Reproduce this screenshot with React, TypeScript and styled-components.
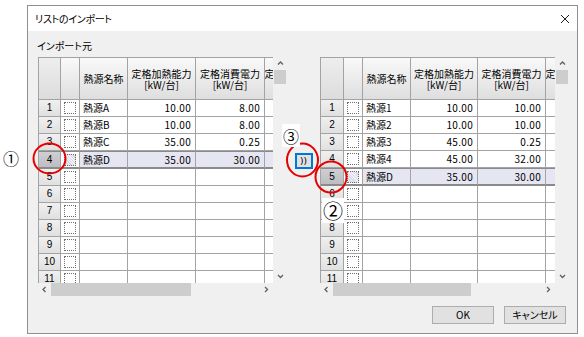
import React from "react";
import styled, { createGlobalStyle, css } from "styled-components";

const GlobalStyle = createGlobalStyle`
  html, body { margin: 0; padding: 0; background: #ffffff; }
  body { font-family: "Noto Sans CJK JP", "Noto Sans", sans-serif; color: #000; }
  *, *::before, *::after { box-sizing: border-box; }
`;

type RowData = { no: number; name?: string; heat?: string; power?: string; selected?: boolean };

const leftRows: RowData[] = [
  { no: 1, name: "熱源A", heat: "10.00", power: "8.00" },
  { no: 2, name: "熱源B", heat: "10.00", power: "8.00" },
  { no: 3, name: "熱源C", heat: "35.00", power: "0.25" },
  { no: 4, name: "熱源D", heat: "35.00", power: "30.00", selected: true },
  { no: 5 }, { no: 6 }, { no: 7 }, { no: 8 }, { no: 9 }, { no: 10 }, { no: 11 },
];

const rightRows: RowData[] = [
  { no: 1, name: "熱源1", heat: "10.00", power: "10.00" },
  { no: 2, name: "熱源2", heat: "10.00", power: "10.00" },
  { no: 3, name: "熱源3", heat: "45.00", power: "0.25" },
  { no: 4, name: "熱源4", heat: "45.00", power: "32.00" },
  { no: 5, name: "熱源D", heat: "35.00", power: "30.00", selected: true },
  { no: 6 }, { no: 7 }, { no: 8 }, { no: 9 }, { no: 10 }, { no: 11 },
];

const LINE = "#a3a3a3";
const SEL_LINE = "#8a8a8a";

const Page = styled.div`
  position: relative;
  width: 584px;
  height: 337px;
  padding: 5px 0 0 27px;
  overflow: hidden;
`;

const Dialog = styled.div`
  width: 551px;
  height: 329px;
  border: 1px solid #8f8f8f;
  background: #f0f0f0;
  display: flex;
  flex-direction: column;
`;

const TitleBar = styled.div`
  height: 25px;
  flex: none;
  background: #ffffff;
  display: flex;
  align-items: center;
  justify-content: space-between;
  padding: 0 7px;
`;

const Title = styled.span`
  font-size: 10px;
  font-feature-settings: "palt";
  letter-spacing: -0.3px;
`;

const Body = styled.div`
  flex: 1;
  display: flex;
  flex-direction: column;
  padding: 8px 8px 9px 10px;
`;

const SectionLabel = styled.div`
  font-size: 10px;
  line-height: 14px;
  height: 14px;
  margin: 0 0 4px -1px;
  font-feature-settings: "palt";
`;

const GridsRow = styled.div`
  display: flex;
  height: 239px;
`;

const Middle = styled.div`
  width: 33px;
  display: flex;
  flex-direction: column;
  align-items: center;
  padding-top: 96px;
`;

const MoveButton = styled.button`
  width: 18px;
  height: 16px;
  padding: 0;
  border: 2px solid #0078d7;
  background: #e1e1e1;
  font-family: "DejaVu Sans", sans-serif;
  font-size: 9px;
  line-height: 10px;
  color: #000;
  letter-spacing: 0px;
`;

const GridFrame = styled.div`
  width: 249px;
  height: 239px;
  display: grid;
  grid-template-columns: 235px 14px;
  grid-template-rows: 226px 13px;
`;

const Viewport = styled.div`
  overflow: hidden;
  background: #ffffff;
  border-top: 1px solid ${LINE};
  border-left: 1px solid ${LINE};
`;

const GridLine = styled.div<{ $cols: string }>`
  display: grid;
  grid-template-columns: ${(p) => p.$cols};
  width: max-content;
`;

const cellBase = css<{ $selected?: boolean }>`
  border-right: 1px solid ${LINE};
  border-bottom: 1px solid ${LINE};
  height: 17px;
  font-size: 10px;
  line-height: 16px;
  white-space: nowrap;
  overflow: hidden;
  ${(p) =>
    p.$selected &&
    css`
      border-top: 1px solid ${SEL_LINE};
      border-bottom: 2px solid ${SEL_LINE};
      height: 18px;
      line-height: 15px;
    `}
`;

const HeaderCell = styled.div`
  height: 42px;
  border-right: 1px solid ${LINE};
  border-bottom: 1px solid ${LINE};
  background: linear-gradient(#f9f9f9, #e9e9e9 60%, #dedede);
  display: flex;
  flex-direction: column;
  align-items: center;
  justify-content: center;
  font-size: 10px;
  line-height: 11px;
  white-space: nowrap;
  overflow: hidden;
`;

const CornerHeader = styled(HeaderCell)`
  background: linear-gradient(#eeeeee, #dcdcdc);
`;

const RowHead = styled.div<{ $selected?: boolean }>`
  ${cellBase}
  text-align: center;
  background: ${(p) =>
    p.$selected ? "linear-gradient(#cfcfd3, #bdbdc2)" : "linear-gradient(#f0f0f0, #e0e0e0)"};
  font-family: "Liberation Sans Narrow", "Liberation Sans", sans-serif;
`;

const CheckCell = styled.div<{ $selected?: boolean }>`
  ${cellBase}
  display: flex;
  align-items: center;
  padding-left: 3px;
  background: #ffffff;
`;

const CheckBox = styled.span<{ $selected?: boolean }>`
  display: block;
  width: 12px;
  height: 12px;
  border: 1px dotted #6e6e6e;
  background: ${(p) =>
    p.$selected
      ? "repeating-linear-gradient(45deg, #d6d8e6 0 1px, #f2f2f8 1px 2px)"
      : "#ffffff"};
`;

const TextCell = styled.div<{ $selected?: boolean }>`
  ${cellBase}
  padding-left: 3px;
  background: ${(p) => (p.$selected ? "#e6e6f2" : "#ffffff")};
`;

const NumCell = styled.div<{ $selected?: boolean }>`
  ${cellBase}
  text-align: right;
  padding-right: 4px;
  letter-spacing: 0.3px;
  background: ${(p) => (p.$selected ? "#e6e6f2" : "#ffffff")};
`;

const VScroll = styled.div`
  background: #f0f0f0;
  display: flex;
  flex-direction: column;
  align-items: center;
`;

const HScroll = styled.div`
  background: #f0f0f0;
  display: flex;
  align-items: center;
`;

const ArrowBox = styled.div<{ $w: number; $h: number }>`
  width: ${(p) => p.$w}px;
  height: ${(p) => p.$h}px;
  flex: none;
  display: flex;
  align-items: center;
  justify-content: center;
`;

const Thumb = styled.div<{ $w: number; $h: number }>`
  width: ${(p) => p.$w}px;
  height: ${(p) => p.$h}px;
  flex: none;
  background: #cdcdcd;
`;

const Spacer = styled.div`
  flex: 1;
`;

const Corner = styled.div`
  background: #f0f0f0;
`;

const Footer = styled.div`
  margin-top: auto;
  display: flex;
  justify-content: flex-end;
  gap: 10px;
  padding-right: 3px;
`;

const DialogButton = styled.button`
  width: 62px;
  height: 18px;
  padding: 0;
  border: 1px solid #adadad;
  background: #e1e1e1;
  font-family: "Noto Sans CJK JP", sans-serif;
  font-size: 10px;
  line-height: 14px;
  color: #000;
  font-feature-settings: "palt";
`;

const Marks = styled.svg`
  position: absolute;
  left: 0;
  top: 0;
  pointer-events: none;
`;

const Callout = styled.span<{ $x: number; $y: number; $w: number; $h: number; $size: number }>`
  position: absolute;
  left: ${(p) => p.$x}px;
  top: ${(p) => p.$y}px;
  width: ${(p) => p.$w}px;
  height: ${(p) => p.$h}px;
  display: flex;
  align-items: center;
  justify-content: center;
  background: #ffffff;
  font-family: "Noto Sans CJK JP", sans-serif;
  font-size: ${(p) => p.$size}px;
  line-height: 1;
  color: #000;
`;

const Chevron = ({ dir }: { dir: "up" | "down" | "left" | "right" }) => {
  const pts = {
    up: "1,4.5 3.5,2 6,4.5",
    down: "1,2 3.5,4.5 6,2",
    left: "4.5,1 2,3.5 4.5,6",
    right: "2,1 4.5,3.5 2,6",
  }[dir];
  return (
    <svg width="7" height="7" viewBox="0 0 7 7">
      <polyline points={pts} fill="none" stroke="#606060" strokeWidth="1.3" />
    </svg>
  );
};

const CloseIcon = () => (
  <svg width="10" height="10" viewBox="0 0 10 10">
    <path d="M1 1 L9 9 M9 1 L1 9" stroke="#1a1a1a" strokeWidth="1" fill="none" />
  </svg>
);

const DataGrid = ({ rows, cols, thumbW }: { rows: RowData[]; cols: string; thumbW: number }) => (
  <GridFrame>
    <Viewport>
      <GridLine $cols={cols}>
        <CornerHeader />
        <HeaderCell />
        <HeaderCell>熱源名称</HeaderCell>
        <HeaderCell>
          <span>定格加熱能力</span>
          <span>[kW/台]</span>
        </HeaderCell>
        <HeaderCell>
          <span>定格消費電力</span>
          <span>[kW/台]</span>
        </HeaderCell>
        <HeaderCell>
          <span>定格燃料消費量</span>
          <span>[kW/台]</span>
        </HeaderCell>
      </GridLine>
      {rows.map((r) => (
        <GridLine key={r.no} $cols={cols}>
          <RowHead $selected={r.selected}>{r.no}</RowHead>
          <CheckCell $selected={r.selected}>
            <CheckBox $selected={r.selected} />
          </CheckCell>
          <TextCell $selected={r.selected}>{r.name ?? ""}</TextCell>
          <NumCell $selected={r.selected}>{r.heat ?? ""}</NumCell>
          <NumCell $selected={r.selected}>{r.power ?? ""}</NumCell>
          <NumCell $selected={r.selected} />
        </GridLine>
      ))}
    </Viewport>
    <VScroll>
      <ArrowBox $w={14} $h={13}>
        <Chevron dir="up" />
      </ArrowBox>
      <Thumb $w={12} $h={14} />
      <Spacer />
      <ArrowBox $w={14} $h={13}>
        <Chevron dir="down" />
      </ArrowBox>
    </VScroll>
    <HScroll>
      <ArrowBox $w={13} $h={13}>
        <Chevron dir="left" />
      </ArrowBox>
      <Thumb $w={thumbW} $h={13} />
      <Spacer />
      <ArrowBox $w={13} $h={13}>
        <Chevron dir="right" />
      </ArrowBox>
    </HScroll>
    <Corner />
  </GridFrame>
);

export default function App() {
  return (
    <>
      <GlobalStyle />
      <Page>
        <Dialog>
          <TitleBar>
            <Title>リストのインポート</Title>
            <CloseIcon />
          </TitleBar>
          <Body>
            <SectionLabel>インポート元</SectionLabel>
            <GridsRow>
              <DataGrid rows={leftRows} cols="22px 19px 48px 68px 69px 70px" thumbW={140} />
              <Middle>
                <MoveButton>))</MoveButton>
              </Middle>
              <DataGrid rows={rightRows} cols="23px 19px 48px 67px 68px 70px" thumbW={138} />
            </GridsRow>
            <Footer>
              <DialogButton>OK</DialogButton>
              <DialogButton>キャンセル</DialogButton>
            </Footer>
          </Body>
        </Dialog>
        <Marks width="584" height="337" viewBox="0 0 584 337">
          <ellipse cx="49.5" cy="158.5" rx="16" ry="15" fill="none" stroke="#e60000" strokeWidth="2" />
          <ellipse cx="302.5" cy="160" rx="15.5" ry="16.5" fill="none" stroke="#e60000" strokeWidth="2" />
          <ellipse cx="331" cy="177" rx="15.5" ry="15.5" fill="none" stroke="#e60000" strokeWidth="2" />
        </Marks>
        <Callout $x={2} $y={149} $w={18} $h={17} $size={16}>①</Callout>
        <Callout $x={282} $y={124} $w={18} $h={23} $size={16}>③</Callout>
        <Callout $x={322} $y={198} $w={22} $h={25} $size={20}>②</Callout>
      </Page>
    </>
  );
}
